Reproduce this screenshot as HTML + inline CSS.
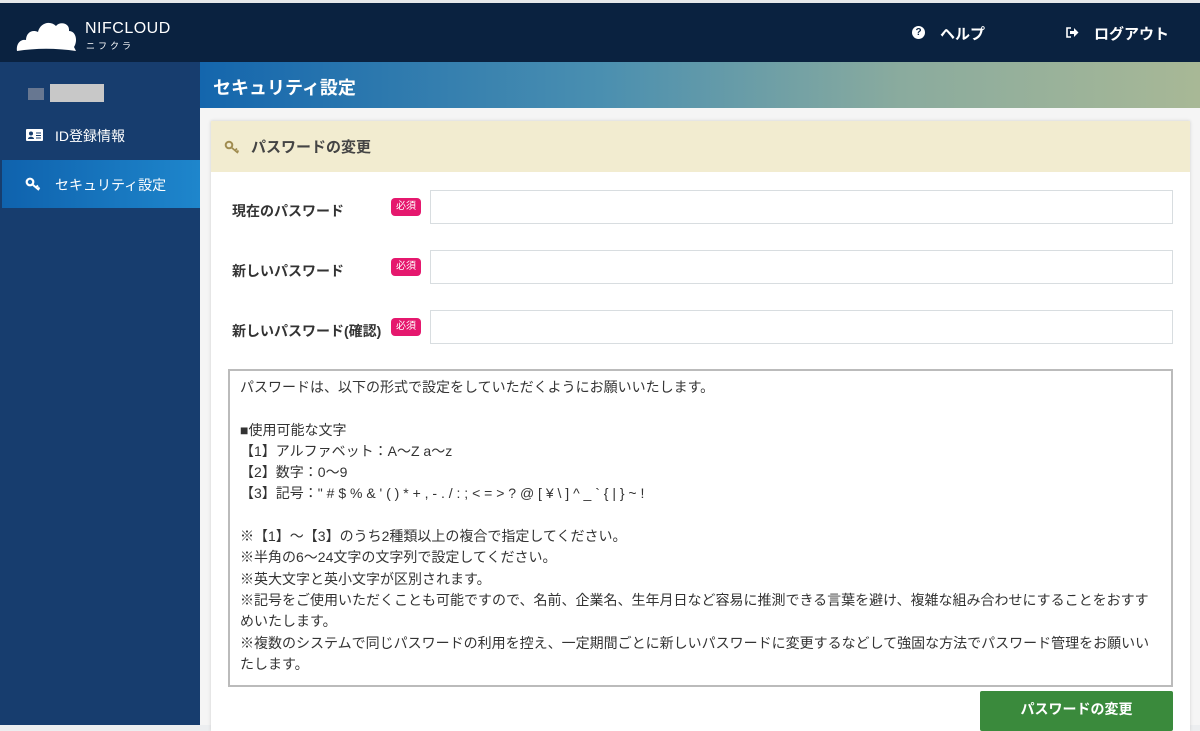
<!DOCTYPE html>
<html><head><meta charset="utf-8"><style>
*{box-sizing:border-box;margin:0;padding:0}
body{width:1200px;height:725px;overflow:hidden;background:#eceef0;font-family:"Liberation Sans","Noto Sans CJK JP",sans-serif;position:relative;color:#333}
.top{position:absolute;left:0;top:0;width:1200px;height:3px;background:#e6e8ea}
.hdr{position:absolute;left:0;top:3px;width:1200px;height:59px;background:#0a2240;color:#fff}
.side{position:absolute;left:0;top:62px;width:200px;height:663px;background:#173d6e;color:#fff}
.main{position:absolute;left:200px;top:62px;width:1000px;height:663px;background:#f5f5f5}
.title{height:46px;background:linear-gradient(90deg,#1466ad,#4a8fb0 40%,#8aab9e 70%,#a8b896);color:#fff;font-weight:bold;font-size:18px;padding:12px 0 0 13px}
.panel{position:absolute;left:11px;top:59px;width:979px;height:610px;background:#fff;box-shadow:0 0 3px #ccc}
.ph{height:51px;background:#f2ecd0;font-weight:bold;font-size:15px;color:#444;padding:15px 0 0 40px;position:relative}
.lbl{position:absolute;left:21px;font-weight:bold;font-size:14px;color:#333}
.req{position:absolute;left:180px;width:30px;height:18px;background:#e5186e;color:#fff;border-radius:4px;font-size:10px;text-align:center;line-height:18px}
.inp{position:absolute;left:219px;width:743px;height:34px;border:1px solid #d8dde0;background:#fff}
.box{position:absolute;left:17px;top:248px;width:945px;height:318px;border:2px solid #bbb;padding:6px 14px 0 10px;font-size:14px;line-height:21.3px;color:#333}
.btn{position:absolute;left:769px;top:570px;width:193px;height:40px;background:#3a8a3c;color:#fff;font-weight:bold;font-size:14px;text-align:center;line-height:36px;border-radius:2px}
</style></head><body>
<div class="top"></div>
<div class="hdr">
<svg style="position:absolute;left:16px;top:14px" width="62" height="36" viewBox="0 0 62 36"><path d="M1 34 C0 26 5 22 10 23 C10 16 16 12 22 15 C24 6 34 3 40 9 C44 4 54 6 53 14 C60 14 62 24 58 30 L60 34 C40 31 20 31 1 34Z" fill="#fff"/></svg>
<div style="position:absolute;left:85px;top:17px;font-size:16px;letter-spacing:0.5px">NIFCLOUD</div>
<div style="position:absolute;left:86px;top:36px;font-size:9px;letter-spacing:3px">ニフクラ</div>
<div style="position:absolute;left:912px;top:23px;width:13px;height:13px;border-radius:50%;background:#fff;color:#0a2240;font-size:10px;font-weight:bold;text-align:center;line-height:13px">?</div>
<div style="position:absolute;left:940px;top:20px;font-size:15px;font-weight:bold">ヘルプ</div>
<svg style="position:absolute;left:1066px;top:24px" width="13" height="11" viewBox="0 0 13 11"><path d="M5 1H1V10H5" fill="none" stroke="#fff" stroke-width="1.6"/><path d="M4 4H8V1L12.5 5.5L8 10V7H4Z" fill="#fff"/></svg>
<div style="position:absolute;left:1094px;top:20px;font-size:15px;font-weight:bold">ログアウト</div>
</div>
<div class="side">
<div style="position:absolute;left:28px;top:26px;width:16px;height:12px;background:#8a90a0;opacity:.7"></div>
<div style="position:absolute;left:50px;top:22px;width:54px;height:18px;background:#c8c8c8"></div>
<svg style="position:absolute;left:26px;top:67px" width="17" height="12" viewBox="0 0 17 12"><rect width="17" height="12" rx="1" fill="#fff"/><circle cx="5" cy="4.5" r="2" fill="#173d6e"/><path d="M2 10C2 7 8 7 8 10Z" fill="#173d6e"/><path d="M10 4H15M10 6.5H15M10 9H15" stroke="#173d6e" stroke-width="1"/></svg>
<div style="position:absolute;left:55px;top:64px;font-size:14px">ID登録情報</div>
<div style="position:absolute;left:2px;top:98px;width:198px;height:48px;background:linear-gradient(90deg,#0f62ad,#1e86cc)"></div>
<svg style="position:absolute;left:25px;top:115px" width="16" height="14" viewBox="0 0 16 14"><circle cx="5" cy="5" r="3.3" fill="none" stroke="#fff" stroke-width="2.2"/><path d="M7.5 7.5L14 13M11 10.5L13 8.5M13 12L14.5 10.5" stroke="#fff" stroke-width="2"/></svg>
<div style="position:absolute;left:55px;top:113px;font-size:14px">セキュリティ設定</div>
</div>
<div class="main">
<div class="title">セキュリティ設定</div>
<div class="panel">
<div class="ph"><svg style="position:absolute;left:13px;top:19px" width="16" height="14" viewBox="0 0 16 14"><circle cx="5" cy="5" r="3.3" fill="none" stroke="#a08c50" stroke-width="2"/><path d="M7.5 7.5L14 13M11 10.5L13 8.5M13 12L14.5 10.5" stroke="#a08c50" stroke-width="1.8"/></svg>パスワードの変更</div>
<div class="lbl" style="top:80px">現在のパスワード</div><div class="req" style="top:77px">必須</div><div class="inp" style="top:69px"></div>
<div class="lbl" style="top:140px">新しいパスワード</div><div class="req" style="top:137px">必須</div><div class="inp" style="top:129px"></div>
<div class="lbl" style="top:200px">新しいパスワード(確認)</div><div class="req" style="top:197px">必須</div><div class="inp" style="top:189px"></div>
<div class="box">パスワードは、以下の形式で設定をしていただくようにお願いいたします。<br><br>■使用可能な文字<br>【1】アルファベット：A～Z a～z<br>【2】数字：0～9<br>【3】記号：" # $ % &amp; ' ( ) * + , - . / : ; &lt; = &gt; ? @ [ ¥ \ ] ^ _ ` { | } ~ !<br><br>※【1】～【3】のうち2種類以上の複合で指定してください。<br>※半角の6～24文字の文字列で設定してください。<br>※英大文字と英小文字が区別されます。<br>※記号をご使用いただくことも可能ですので、名前、企業名、生年月日など容易に推測できる言葉を避け、複雑な組み合わせにすることをおすすめいたします。<br>※複数のシステムで同じパスワードの利用を控え、一定期間ごとに新しいパスワードに変更するなどして強固な方法でパスワード管理をお願いいたします。</div>
<div class="btn">パスワードの変更</div>
</div>
</div>
</body></html>
